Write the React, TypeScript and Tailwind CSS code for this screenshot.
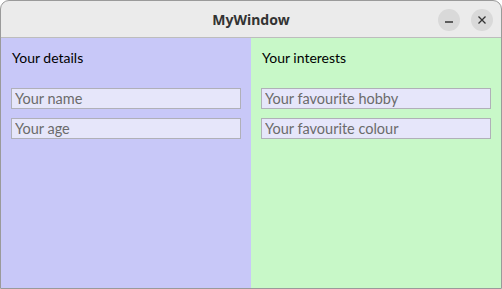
import React from "react";

const bodyFont = { fontFamily: 'Lato, "Open Sans", sans-serif' };

function Field({ placeholder }: { placeholder: string }) {
  return (
    <input
      placeholder={placeholder}
      className="block h-[21px] w-[230px] border border-[#b0b0b8] bg-[#e6e6fa] px-[3px] text-[14.5px] text-[#333] placeholder:text-[#6b6b6b] outline-none"
      style={bodyFont}
    />
  );
}

function Panel({ title, fields, bg }: { title: string; fields: string[]; bg: string }) {
  return (
    <div className={`flex-1 px-[10px] pt-[10px] ${bg}`}>
      <div className="ml-[1px] text-[14px] leading-[20px] text-black">{title}</div>
      <div className="mt-[20px] flex flex-col gap-[9px]">
        {fields.map((f) => (
          <Field key={f} placeholder={f} />
        ))}
      </div>
    </div>
  );
}

export default function App() {
  return (
    <div className="h-[289px] w-[502px] bg-white" style={bodyFont}>
      <div className="flex h-full flex-col overflow-hidden rounded-t-[9px] border border-[#9a9a9a] bg-[#ebebeb]">
        <div className="relative flex h-[37px] shrink-0 items-center justify-center border-b border-[#bdbdbd]">
          <span className="text-[14px] font-bold text-[#333]" style={{ fontFamily: '"Noto Sans", sans-serif' }}>
            MyWindow
          </span>
          <div className="absolute right-[8px] top-[8px] flex gap-[11px]">
            <button className="flex h-[22px] w-[22px] items-center justify-center rounded-full bg-[#d9d9d9]">
              <svg width="10" height="10" viewBox="0 0 10 10">
                <path d="M1 7h8" stroke="#333" strokeWidth="1.4" />
              </svg>
            </button>
            <button className="flex h-[22px] w-[22px] items-center justify-center rounded-full bg-[#d9d9d9]">
              <svg width="10" height="10" viewBox="0 0 10 10">
                <path d="M1.5 1.5l7 7M8.5 1.5l-7 7" stroke="#333" strokeWidth="1.3" />
              </svg>
            </button>
          </div>
        </div>
        <div className="flex flex-1">
          <Panel title="Your details" fields={["Your name", "Your age"]} bg="bg-[#c8c8f8]" />
          <Panel title="Your interests" fields={["Your favourite hobby", "Your favourite colour"]} bg="bg-[#c8f8c8]" />
        </div>
      </div>
    </div>
  );
}
